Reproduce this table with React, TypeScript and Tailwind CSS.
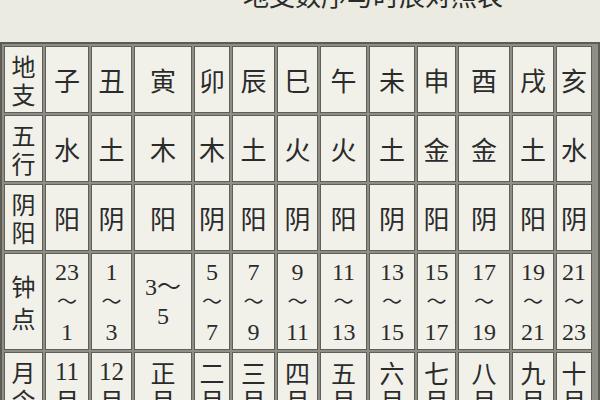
import type { ReactNode } from 'react'

const cjk = "font-['Noto_Sans_CJK_SC',sans-serif]"
const serif = "font-['Liberation_Serif','Noto_Sans_CJK_SC',serif]"

const branches = ['子', '丑', '寅', '卯', '辰', '巳', '午', '未', '申', '酉', '戌', '亥']
const elements = ['水', '土', '木', '木', '土', '火', '火', '土', '金', '金', '土', '水']
const yinYang = ['阳', '阴', '阳', '阴', '阳', '阴', '阳', '阴', '阳', '阴', '阳', '阴']
const hours: [string, string][] = [
  ['23', '1'],
  ['1', '3'],
  ['3', '5'],
  ['5', '7'],
  ['7', '9'],
  ['9', '11'],
  ['11', '13'],
  ['13', '15'],
  ['15', '17'],
  ['17', '19'],
  ['19', '21'],
  ['21', '23'],
]
const months = ['11', '12', '正', '二', '三', '四', '五', '六', '七', '八', '九', '十']

function Cell({ children }: { children: ReactNode }) {
  return (
    <div className="bg-[#f1f1ea] border border-[#5f5f58] flex flex-col items-center justify-center text-center text-[#2b2b2b] overflow-hidden">
      {children}
    </div>
  )
}

function RowHead({ top, bottom, gap = false }: { top: string; bottom: string; gap?: boolean }) {
  return (
    <Cell>
      <div className={`${cjk} text-[24px] ${gap ? 'leading-[32px]' : 'leading-[28px]'}`}>
        <div>{top}</div>
        <div>{bottom}</div>
      </div>
    </Cell>
  )
}

export default function App() {
  return (
    <div className="w-[600px] h-[400px] overflow-hidden bg-[#ebebe2]">
      {/* Title, clipped at the top edge */}
      <div className="h-[42px] overflow-hidden">
        <div className={`${cjk} mt-[-18px] pl-[243px] text-[26px] leading-[26px] text-[#2a2a2a] whitespace-nowrap`}>
          地支数序与时辰对照表
        </div>
      </div>

      {/* Table */}
      <div className="w-[600px] border-2 border-[#5c5c54] bg-[#8e8e86] p-[2px]">
        <div className="grid gap-[2px] grid-cols-[39px_44px_41px_58px_36px_43px_41px_47px_46px_39px_52px_42px_36px] grid-rows-[67px_67px_67px_97px_67px]">
          <RowHead top="地" bottom="支" />
          {branches.map((b) => (
            <Cell key={b}>
              <span className={`${cjk} text-[26px] leading-none`}>{b}</span>
            </Cell>
          ))}

          <RowHead top="五" bottom="行" />
          {elements.map((e, i) => (
            <Cell key={i}>
              <span className={`${cjk} text-[26px] leading-none`}>{e}</span>
            </Cell>
          ))}

          <RowHead top="阴" bottom="阳" />
          {yinYang.map((y, i) => (
            <Cell key={i}>
              <span className={`${cjk} text-[26px] leading-none`}>{y}</span>
            </Cell>
          ))}

          <RowHead top="钟" bottom="点" gap />
          {hours.map(([from, to], i) =>
            i === 2 ? (
              <Cell key={i}>
                <div className={`${serif} text-[24px] leading-[29px]`}>
                  <div>{from}～</div>
                  <div>{to}</div>
                </div>
              </Cell>
            ) : (
              <Cell key={i}>
                <div className={`${serif} text-[24px] leading-[30px]`}>
                  <div>{from}</div>
                  <div className="text-[20px]">～</div>
                  <div>{to}</div>
                </div>
              </Cell>
            )
          )}

          <RowHead top="月" bottom="令" />
          {months.map((m) => (
            <Cell key={m}>
              <div className="leading-[28px]">
                <div className={`${/\d/.test(m) ? serif : cjk} text-[25px]`}>{m}</div>
                <div className={`${cjk} text-[25px]`}>月</div>
              </div>
            </Cell>
          ))}
        </div>
      </div>
    </div>
  )
}
